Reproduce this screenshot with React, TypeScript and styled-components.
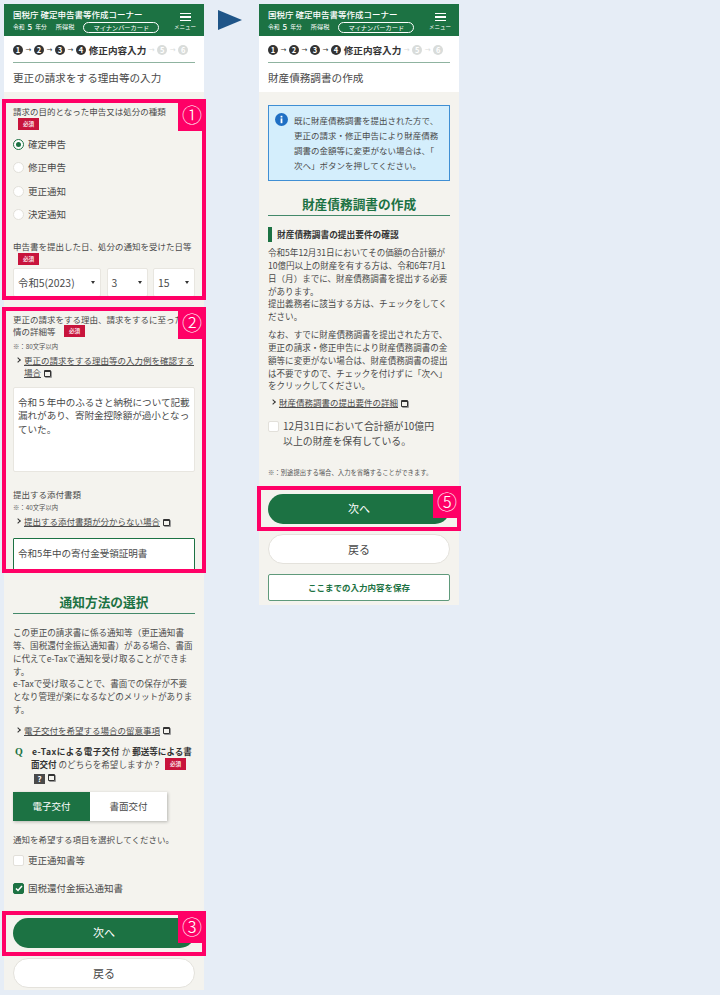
import React, { FunctionComponent, ReactNode } from 'react'
import styled, { createGlobalStyle } from 'styled-components'

const GlobalStyle = createGlobalStyle`
  html, body {
    margin: 0;
    padding: 0;
    background: #e6edf6;
    font-family: "Noto Sans CJK JP", "Noto Sans", sans-serif;
    color: #4a4a4a;
  }
`

const Page = styled.div`
  display: flex;
  align-items: flex-start;
  padding: 4px 0 0 4px;
  width: 720px;
  height: 995px;
  box-sizing: border-box;
  overflow: hidden;
`

const Phone = styled.div`
  width: 200px;
  flex: none;
  background: #f4f3ee;
`

const ArrowBox = styled.div`
  width: 55px;
  flex: none;
  display: flex;
  justify-content: center;
  padding: 6px 4px 0 0;
  box-sizing: border-box;
`

const Header = styled.header`
  height: 32px;
  background: #1c7243;
  color: #fff;
  display: flex;
  justify-content: space-between;
  padding: 0 7px 0 9px;
`

const HeaderMain = styled.div`
  display: flex;
  flex-direction: column;
  padding-top: 3px;
`

const HeaderTitle = styled.div`
  font-size: 8.5px;
  font-weight: 500;
  line-height: 14px;
  white-space: nowrap;
`

const HeaderSub = styled.div`
  display: flex;
  align-items: center;
  font-size: 5.8px;
  line-height: 12px;
  white-space: nowrap;
  b {
    font-size: 8px;
    font-weight: 500;
    margin: 0 3px;
  }
`

const HeaderTax = styled.span`
  margin-left: 9px;
  font-size: 6.2px;
`

const Pill = styled.span`
  margin-left: 9px;
  width: 76px;
  height: 11px;
  box-sizing: border-box;
  border: 1px solid #fff;
  border-radius: 6px;
  font-size: 6.2px;
  line-height: 9px;
  text-align: center;
`

const MenuButton = styled.div`
  width: 24px;
  display: flex;
  flex-direction: column;
  align-items: center;
  padding-top: 9px;
  font-size: 5.5px;
  line-height: 8px;
  white-space: nowrap;
`

const MenuBar = styled.span`
  width: 11px;
  height: 1.4px;
  background: #fff;
  margin-bottom: 2px;
`

const Top = styled.div`
  background: #fff;
  padding: 0 9px;
  height: 56px;
`

const Steps = styled.div`
  height: 27px;
  box-sizing: border-box;
  border-bottom: 1px solid #8fb3a0;
  display: flex;
  align-items: center;
  gap: 1.8px;
  padding-top: 1px;
  font-size: 9.6px;
  font-weight: 700;
  color: #333;
  white-space: nowrap;
`

const StepDot = styled.span<{ $off?: boolean }>`
  width: 10px;
  height: 10px;
  border-radius: 50%;
  background: ${p => (p.$off ? '#d9dcda' : '#333')};
  color: #fff;
  font-size: 7.5px;
  line-height: 10px;
  text-align: center;
  flex: none;
`

const StepArrow = styled.span<{ $off?: boolean }>`
  font-size: 7px;
  width: 7.4px;
  text-align: center;
  font-family: "DejaVu Sans", sans-serif;
  font-weight: 400;
  color: ${p => (p.$off ? '#d9dcda' : '#333')};
`

const StepName = styled.span`
  margin-left: 1px;
`

const PageTitle = styled.h1`
  margin: 0;
  font-size: 10.6px;
  font-weight: 400;
  line-height: 29px;
  color: #4a4a4a;
`

const Body = styled.main`
  padding: 0 9px;
`

const Marked = styled.section`
  position: relative;
`

const Frame = styled.div<{ $top: number; $bottom: number }>`
  position: absolute;
  left: -11px;
  right: -11px;
  top: ${p => p.$top}px;
  bottom: ${p => p.$bottom}px;
  border: 4px solid #ff0066;
  pointer-events: none;
`

const FrameTag = styled.span`
  position: absolute;
  top: -4px;
  right: -4px;
  width: 28px;
  height: 32px;
  background: #ff0066;
  color: #fff;
  font-size: 20px;
  font-weight: 300;
  line-height: 31px;
  text-align: center;
`

const Label = styled.div`
  font-size: 8.5px;
  line-height: 12.5px;
  color: #4a4a4a;
`

const Required = styled.span`
  display: inline-block;
  width: 21px;
  height: 12px;
  background: #c8143c;
  color: #fff;
  font-size: 5.6px;
  line-height: 12px;
  text-align: center;
  font-weight: 500;
  vertical-align: top;
`

const RequiredLine = styled.div`
  padding-left: 5px;
  height: 12px;
`

const RadioList = styled.div`
  display: flex;
  flex-direction: column;
  gap: 12.6px;
  margin: 9px 0 20px;
`

const RadioRow = styled.div`
  display: flex;
  align-items: center;
  gap: 4px;
  font-size: 9.5px;
  line-height: 11px;
`

const RadioMark = styled.span<{ $on?: boolean }>`
  width: 11px;
  height: 11px;
  box-sizing: border-box;
  border-radius: 50%;
  background: #fff;
  border: 1px solid ${p => (p.$on ? '#1c7243' : '#e2e0da')};
  display: flex;
  align-items: center;
  justify-content: center;
  &::after {
    content: '';
    width: 5px;
    height: 5px;
    border-radius: 50%;
    background: ${p => (p.$on ? '#1c7243' : 'transparent')};
  }
`

const SelectRow = styled.div`
  display: flex;
  gap: 5.5px;
  margin-top: 3px;
`

const Select = styled.div<{ $width: number }>`
  width: ${p => p.$width}px;
  height: 29px;
  box-sizing: border-box;
  background: #fff;
  border: 1px solid #e8e6e0;
  border-radius: 2px;
  display: flex;
  align-items: center;
  justify-content: space-between;
  padding: 0 5px 0 4px;
  font-size: 10.4px;
  &::after {
    content: '';
    border: 2.6px solid transparent;
    border-top: 3px solid #333;
    border-bottom: none;
  }
`

const Note = styled.div`
  font-size: 6.35px;
  line-height: 12px;
  margin-bottom: 1px;
  color: #555;
`

const LinkRow = styled.div`
  position: relative;
  padding-left: 11px;
  font-size: 8.5px;
  line-height: 12.6px;
  color: #4a4a4a;
  span {
    text-decoration: underline;
  }
  &::before {
    content: '';
    position: absolute;
    left: 3px;
    top: 4px;
    width: 3px;
    height: 3px;
    border-top: 1px solid #333;
    border-right: 1px solid #333;
    transform: rotate(45deg);
  }
`

const OpenMark = styled.i`
  display: inline-block;
  width: 5px;
  height: 4px;
  margin-left: 3px;
  border: 1px solid #333;
  border-top-width: 2px;
  border-radius: 1px;
  box-shadow: 1px 1px 0 #999;
  vertical-align: -0.5px;
`

const TextArea = styled.div`
  height: 85px;
  box-sizing: border-box;
  background: #fff;
  border: 1px solid #e8e6e0;
  border-radius: 2px;
  padding: 8px 4px;
  margin-top: 8px;
  font-size: 9.55px;
  line-height: 13.4px;
`

const TextInput = styled.div`
  height: 33px;
  box-sizing: border-box;
  background: #fff;
  border: 1.5px solid #1c7243;
  border-radius: 1px;
  padding: 0 4px;
  margin-top: 10px;
  font-size: 9.55px;
  line-height: 28px;
  white-space: nowrap;
`

const Heading = styled.h2`
  margin: 0;
  padding-bottom: 2px;
  text-align: center;
  font-size: 12.7px;
  line-height: 19px;
  font-weight: 700;
  color: #1c7243;
  border-bottom: 1.5px solid #43896a;
`

const Para = styled.p`
  margin: 0;
  font-size: 8.55px;
  line-height: 12.85px;
  color: #4a4a4a;
`

const Question = styled.div`
  position: relative;
  padding-left: 18px;
  font-size: 8.55px;
  line-height: 13px;
  height: 39px;
  color: #4a4a4a;
  b {
    color: #333;
  }
  b:first-of-type {
    margin-left: 1px;
    letter-spacing: 0.5px;
  }
  ${Required} {
    margin-left: 2px;
  }
`

const QuestionMark = styled.span`
  position: absolute;
  left: 2px;
  top: 0;
  font-family: "Liberation Serif", serif;
  font-weight: 700;
  font-size: 10px;
  color: #1c7243;
`

const HelpMark = styled.span`
  display: inline-block;
  width: 11px;
  height: 10px;
  margin-left: 3px;
  background: #4a4a4a;
  color: #fff;
  font-size: 8px;
  line-height: 10px;
  text-align: center;
  font-weight: 700;
  vertical-align: -1px;
`

const Toggle = styled.div`
  display: flex;
  width: 154px;
  height: 29px;
  margin-top: 8.5px;
  box-shadow: 1px 1px 3px rgba(0, 0, 0, 0.25);
`

const ToggleItem = styled.div<{ $on?: boolean }>`
  flex: 1;
  background: ${p => (p.$on ? '#1c7243' : '#fff')};
  color: ${p => (p.$on ? '#fff' : '#4a4a4a')};
  font-size: 9.5px;
  line-height: 28px;
  text-align: center;
`

const CheckRow = styled.div<{ $big?: boolean }>`
  display: flex;
  align-items: flex-start;
  gap: 4px;
  font-size: ${p => (p.$big ? '9.9px' : '9.5px')};
  line-height: ${p => (p.$big ? '15px' : '11px')};
`

const CheckBox = styled.span<{ $on?: boolean; $low?: boolean }>`
  flex: none;
  width: 11px;
  height: 11px;
  margin-top: ${p => (p.$low ? '2px' : '0')};
  box-sizing: border-box;
  border-radius: 2px;
  background: ${p => (p.$on ? '#1c7243' : '#fff')};
  border: 1px solid ${p => (p.$on ? '#1c7243' : '#e2e0da')};
  display: flex;
  align-items: center;
  justify-content: center;
  svg {
    display: block;
  }
`

const PrimaryButton = styled.div`
  height: 30px;
  border-radius: 15px;
  background: #1c7243;
  color: #fff;
  font-size: 11px;
  line-height: 29px;
  text-align: center;
`

const BackButton = styled.div`
  height: 30px;
  box-sizing: border-box;
  border-radius: 15px;
  background: #fff;
  border: 1px solid #e4e2dc;
  color: #4a4a4a;
  font-size: 11px;
  line-height: 28px;
  text-align: center;
`

const SaveButton = styled.div`
  height: 27px;
  box-sizing: border-box;
  border-radius: 2px;
  background: #fff;
  border: 1.5px solid #5f9a7b;
  color: #1c7243;
  font-size: 8.5px;
  font-weight: 700;
  line-height: 24px;
  text-align: center;
`

const InfoBox = styled.div`
  display: flex;
  gap: 6px;
  height: 76px;
  box-sizing: border-box;
  background: #d4eefc;
  border: 1.5px solid #3f8fd4;
  padding: 7px 6px;
  font-size: 8.5px;
  line-height: 15px;
  color: #4a4a4a;
  white-space: nowrap;
`

const InfoIcon = styled.svg`
  flex: none;
  width: 13px;
  height: 13px;
`

const SubHeading = styled.h3`
  margin: 0;
  border-left: 4px solid #1c7243;
  padding-left: 5px;
  font-size: 8.7px;
  line-height: 15px;
  font-weight: 700;
  color: #333;
`

const Gap = styled.div<{ $h: number }>`
  height: ${p => p.$h}px;
`

const Hamburger: FunctionComponent = () => (
  <MenuButton>
    <MenuBar />
    <MenuBar />
    <MenuBar />
    メニュー
  </MenuButton>
)

const AppHeader: FunctionComponent<{ title: string }> = ({ title }) => (
  <>
    <Header>
      <HeaderMain>
        <HeaderTitle>国税庁 確定申告書等作成コーナー</HeaderTitle>
        <HeaderSub>
          令和<b>5</b>年分
          <HeaderTax>所得税</HeaderTax>
          <Pill>マイナンバーカード</Pill>
        </HeaderSub>
      </HeaderMain>
      <Hamburger />
    </Header>
    <Top>
      <Steps>
        <StepDot>1</StepDot>
        <StepArrow>→</StepArrow>
        <StepDot>2</StepDot>
        <StepArrow>→</StepArrow>
        <StepDot>3</StepDot>
        <StepArrow>→</StepArrow>
        <StepDot>4</StepDot>
        <StepName>修正内容入力</StepName>
        <StepArrow $off>→</StepArrow>
        <StepDot $off>5</StepDot>
        <StepArrow $off>→</StepArrow>
        <StepDot $off>6</StepDot>
      </Steps>
      <PageTitle>{title}</PageTitle>
    </Top>
  </>
)

const Mark: FunctionComponent<{ tag: string; top: number; bottom: number; children: ReactNode }> = ({ tag, top, bottom, children }) => (
  <Marked>
    {children}
    <Frame $top={top} $bottom={bottom}>
      <FrameTag>{tag}</FrameTag>
    </Frame>
  </Marked>
)

const Check = () => (
  <svg width="8" height="7" viewBox="0 0 8 7">
    <path d="M1 3.5 L3 5.5 L7 1" fill="none" stroke="#fff" strokeWidth="1.5" />
  </svg>
)

const Radio: FunctionComponent<{ on?: boolean; children: ReactNode }> = ({ on, children }) => (
  <RadioRow>
    <RadioMark $on={on} />
    {children}
  </RadioRow>
)

const LeftForm: FunctionComponent = () => (
  <Phone>
    <AppHeader title="更正の請求をする理由等の入力" />
    <Body>
      <Gap $h={13} />
      <Mark tag="①" top={-6} bottom={-3}>
        <Label>請求の目的となった申告又は処分の種類</Label>
        <RequiredLine>
          <Required>必須</Required>
        </RequiredLine>
        <RadioList>
          <Radio on>確定申告</Radio>
          <Radio>修正申告</Radio>
          <Radio>更正通知</Radio>
          <Radio>決定通知</Radio>
        </RadioList>
        <Label>申告書を提出した日、処分の通知を受けた日等</Label>
        <RequiredLine>
          <Required>必須</Required>
        </RequiredLine>
        <SelectRow>
          <Select $width={88}>令和5(2023)</Select>
          <Select $width={41}>3</Select>
          <Select $width={42}>15</Select>
        </SelectRow>
      </Mark>
      <Gap $h={16} />
      <Mark tag="②" top={-6} bottom={-2}>
        <Label>
          更正の請求をする理由、請求をするに至った事情の詳細等　<Required>必須</Required>
        </Label>
        <Gap $h={3} />
        <Note>※：80文字以内</Note>
        <LinkRow>
          <span>更正の請求をする理由等の入力例を確認する場合</span>
          <OpenMark />
        </LinkRow>
        <TextArea>令和５年中のふるさと納税について記載漏れがあり、寄附金控除額が過小となっていた。</TextArea>
        <Gap $h={16} />
        <Label>提出する添付書類</Label>
        <Gap $h={2} />
        <Note>※：40文字以内</Note>
        <LinkRow>
          <span>提出する添付書類が分からない場合</span>
          <OpenMark />
        </LinkRow>
        <TextInput>令和5年中の寄付金受領証明書</TextInput>
      </Mark>
      <Gap $h={21} />
      <Heading>通知方法の選択</Heading>
      <Gap $h={12} />
      <Para>
        この更正の請求書に係る通知等（更正通知書等、国税還付金振込通知書）がある場合、書面に代えてe-Taxで通知を受け取ることができます。
        <br />
        e-Taxで受け取ることで、書面での保存が不要となり管理が楽になるなどのメリットがあります。
      </Para>
      <Gap $h={8} />
      <LinkRow>
        <span>電子交付を希望する場合の留意事項</span>
        <OpenMark />
      </LinkRow>
      <Gap $h={8} />
      <Question>
        <QuestionMark>Q</QuestionMark>
        <b>e-Taxによる電子交付</b> か <b>郵送等による書面交付</b> のどちらを希望しますか？ <Required>必須</Required>
        <br />
        <HelpMark>?</HelpMark>
        <OpenMark />
      </Question>
      <Toggle>
        <ToggleItem $on>電子交付</ToggleItem>
        <ToggleItem>書面交付</ToggleItem>
      </Toggle>
      <Gap $h={11.5} />
      <Label>通知を希望する項目を選択してください。</Label>
      <Gap $h={10} />
      <CheckRow>
        <CheckBox />
        更正通知書等
      </CheckRow>
      <Gap $h={17} />
      <CheckRow>
        <CheckBox $on>
          <Check />
        </CheckBox>
        国税還付金振込通知書
      </CheckRow>
      <Gap $h={23.5} />
      <Mark tag="③" top={-7} bottom={-8}>
        <PrimaryButton>次へ</PrimaryButton>
      </Mark>
      <Gap $h={10} />
      <BackButton>戻る</BackButton>
      <Gap $h={2} />
    </Body>
  </Phone>
)

const RightForm: FunctionComponent = () => (
  <Phone>
    <AppHeader title="財産債務調書の作成" />
    <Body>
      <Gap $h={13} />
      <InfoBox>
        <InfoIcon viewBox="0 0 13 13">
          <circle cx="6.5" cy="6.5" r="6.5" fill="#1f6fc4" />
          <rect x="5.6" y="5.4" width="1.8" height="4.8" fill="#fff" />
          <rect x="5.6" y="2.8" width="1.8" height="1.7" fill="#fff" />
        </InfoIcon>
        <div>
          既に財産債務調書を提出された方で、
          <br />
          更正の請求・修正申告により財産債務
          <br />
          調書の金額等に変更がない場合は、「
          <br />
          次へ」ボタンを押してください。
        </div>
      </InfoBox>
      <Gap $h={13} />
      <Heading>財産債務調書の作成</Heading>
      <Gap $h={11} />
      <SubHeading>財産債務調書の提出要件の確認</SubHeading>
      <Gap $h={4} />
      <Para>
        令和5年12月31日においてその価額の合計額が10億円以上の財産を有する方は、令和6年7月1日（月）までに、財産債務調書を提出する必要があります。
        <br />
        提出義務者に該当する方は、チェックをしてください。
      </Para>
      <Gap $h={5} />
      <Para>なお、すでに財産債務調書を提出された方で、更正の請求・修正申告により財産債務調書の金額等に変更がない場合は、財産債務調書の提出は不要ですので、チェックを付けずに「次へ」をクリックしてください。</Para>
      <Gap $h={4} />
      <LinkRow>
        <span>財産債務調書の提出要件の詳細</span>
        <OpenMark />
      </LinkRow>
      <Gap $h={10} />
      <CheckRow $big>
        <CheckBox $low />
        <div>
          12月31日において合計額が10億円
          <br />
          以上の財産を保有している。
        </div>
      </CheckRow>
      <Gap $h={18} />
      <Note>※：別途提出する場合、入力を省略することができます。</Note>
      <Gap $h={14} />
      <Mark tag="⑤" top={-8} bottom={-7}>
        <PrimaryButton>次へ</PrimaryButton>
      </Mark>
      <Gap $h={10} />
      <BackButton>戻る</BackButton>
      <Gap $h={10} />
      <SaveButton>ここまでの入力内容を保存</SaveButton>
      <Gap $h={4} />
    </Body>
  </Phone>
)

const App: FunctionComponent = () => (
  <>
    <GlobalStyle />
    <Page>
      <LeftForm />
      <ArrowBox>
        <svg width="24" height="20" viewBox="0 0 24 20">
          <path d="M0 0 L24 10 L0 20 Z" fill="#1f5588" />
        </svg>
      </ArrowBox>
      <RightForm />
    </Page>
  </>
)

export default App
